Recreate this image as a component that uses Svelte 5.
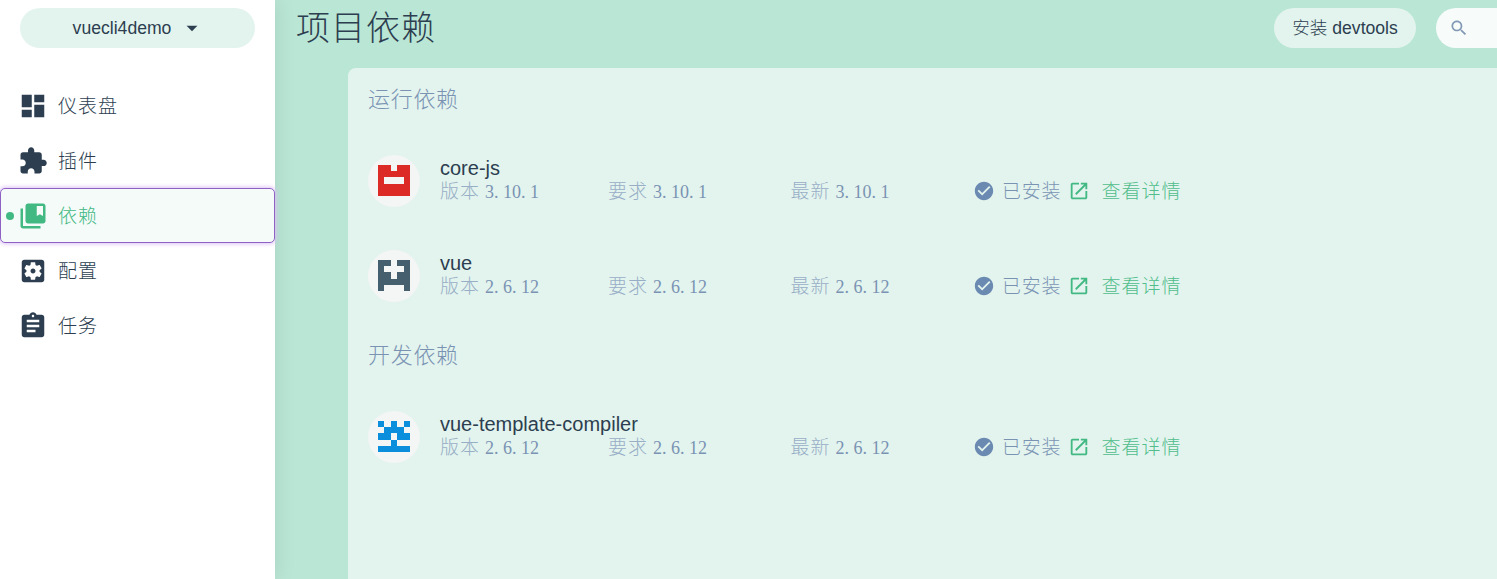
<script>
  const nav = [
    { label: '仪表盘', path: 'M3 13h8V3H3v10zm0 8h8v-6H3v6zm10 0h8V11h-8v10zm0-18v6h8V3h-8z' },
    { label: '插件', path: 'M20.5 11H19V7c0-1.1-.9-2-2-2h-4V3.500C13 2.120 11.880 1 10.500 1S8 2.120 8 3.500V5H4c-1.100 0-1.990.9-1.990 2v3.800H3.500c1.490 0 2.700 1.210 2.700 2.700s-1.210 2.700-2.700 2.700H2V20c0 1.100.9 2 2 2h3.800v-1.500c0-1.490 1.210-2.700 2.700-2.700s2.700 1.210 2.700 2.700V22H17c1.100 0 2-.9 2-2v-4h1.500c1.380 0 2.500-1.120 2.500-2.500S21.880 11 20.500 11z' },
    { label: '依赖', active: true, path: 'M4 6H2v14c0 1.100.9 2 2 2h14v-2H4V6zm16-4H8c-1.100 0-2 .9-2 2v12c0 1.100.9 2 2 2h12c1.100 0 2-.9 2-2V4c0-1.100-.9-2-2-2zm0 10l-2.500-1.500L15 12V4h5v8z' },
    { label: '配置', path: 'M12 10c-1.100 0-2 .9-2 2s.9 2 2 2 2-.9 2-2-.9-2-2-2zm7-7H5c-1.110 0-2 .9-2 2v14c0 1.100.89 2 2 2h14c1.110 0 2-.9 2-2V5c0-1.100-.89-2-2-2zm-1.750 9c0 .23-.02.46-.05.68l1.480 1.160c.13.11.17.3.08.45l-1.400 2.420c-.09.15-.27.21-.43.15l-1.740-.7c-.36.28-.76.51-1.180.69l-.26 1.850c-.03.17-.18.3-.35.3h-2.800c-.17 0-.32-.13-.35-.29l-.26-1.850c-.43-.18-.82-.41-1.180-.69l-1.740.7c-.16.06-.34 0-.43-.15l-1.400-2.420c-.09-.15-.05-.34.08-.45l1.480-1.160c-.03-.23-.05-.46-.05-.69s.02-.46.05-.68l-1.480-1.160c-.13-.11-.17-.3-.08-.45l1.400-2.420c.09-.15.27-.21.43-.15l1.740.7c.36-.28.76-.51 1.180-.69l.26-1.850c.03-.17.18-.3.35-.3h2.800c.17 0 .32.13.35.29l.26 1.850c.43.18.82.41 1.180.69l1.740-.7c.16-.06.34 0 .43.15l1.400 2.420c.09.15.05.34-.08.45l-1.480 1.160c.03.23.05.46.05.69z' },
    { label: '任务', path: 'M19 3h-4.180C14.400 1.840 13.300 1 12 1c-1.300 0-2.400.84-2.820 2H5c-1.100 0-2 .9-2 2v14c0 1.100.9 2 2 2h14c1.100 0 2-.9 2-2V5c0-1.100-.9-2-2-2zm-7 0c.55 0 1 .45 1 1s-.45 1-1 1-1-.45-1-1 .45-1 1-1zm2 14H7v-2h7v2zm3-4H7v-2h10v2zm0-4H7V7h10v2z' }
  ];

  const groups = [
    {
      title: '运行依赖',
      items: [
        { name: 'core-js', version: '3.10.1', color: '#dc2a26', cells: ['11011', '11111', '10001', '11111', '11111'] },
        { name: 'vue', version: '2.6.12', color: '#455f6e', cells: ['11011', '10001', '11011', '11111', '10001'] }
      ]
    },
    {
      title: '开发依赖',
      items: [
        { name: 'vue-template-compiler', version: '2.6.12', color: '#0b8fdc', cells: ['10101', '01110', '11011', '00100', '11111'] }
      ]
    }
  ];

  const identicon = (cells) =>
    cells
      .flatMap((row, y) => [...row].map((c, x) => (c === '1' ? `M${x} ${y}h1v1h-1z` : '')))
      .join('');
</script>

{#snippet field(label, version)}
  <span class="field"><span class="label">{label}</span><span class="version">{#each version as ch}{#if ch === '.'}<span class="dot">.</span>{:else}{ch}{/if}{/each}</span></span>
{/snippet}

<div class="app">
  <aside>
    <button class="project">
      <span>vuecli4demo</span>
      <svg class="caret" viewBox="0 0 24 24"><path d="M7 10l5 5 5-5z" /></svg>
    </button>
    <nav>
      {#each nav as item}
        <a class="nav-item" class:active={item.active}>
          <svg viewBox="0 0 24 24"><path d={item.path} /></svg>
          <span>{item.label}</span>
        </a>
      {/each}
    </nav>
  </aside>

  <main>
    <header>
      <h1>项目依赖</h1>
      <button class="devtools">安装 devtools</button>
      <div class="search">
        <svg viewBox="0 0 24 24"><path d="M15.500 14h-.79l-.28-.27C15.410 12.590 16 11.110 16 9.500 16 5.910 13.090 3 9.500 3S3 5.910 3 9.500 5.910 16 9.500 16c1.610 0 3.090-.59 4.230-1.570l.27.28v.79l5 4.990L20.490 19l-4.990-5zm-6 0C7.010 14 5 11.990 5 9.500S7.010 5 9.500 5 14 7.010 14 9.500 11.990 14 9.500 14z" /></svg>
      </div>
    </header>

    <section class="panel">
      {#each groups as group}
        <h2>{group.title}</h2>
        {#each group.items as item}
          <div class="package">
            <div class="avatar">
              <svg viewBox="0 0 5 5" preserveAspectRatio="none" shape-rendering="crispEdges"><path d={identicon(item.cells)} fill={item.color} /></svg>
            </div>
            <div class="info">
              <div class="name">{item.name}</div>
              <div class="meta">
                {@render field('版本', item.version)}
                {@render field('要求', item.version)}
                {@render field('最新', item.version)}
                <span class="installed">
                  <svg viewBox="0 0 24 24"><path d="M12 2C6.480 2 2 6.480 2 12s4.480 10 10 10 10-4.480 10-10S17.520 2 12 2zm-2 15l-5-5 1.410-1.410L10 14.170l7.590-7.590L19 8l-9 9z" /></svg>
                  <span>已安装</span>
                </span>
                <a class="details">
                  <svg viewBox="0 0 24 24"><path d="M19 19H5V5h7V3H5c-1.110 0-2 .9-2 2v14c0 1.100.89 2 2 2h14c1.100 0 2-.9 2-2v-7h-2v7zM14 3v2h3.590l-9.830 9.830 1.410 1.410L19 6.410V10h2V3h-7z" /></svg>
                  <span>查看详情</span>
                </a>
              </div>
            </div>
          </div>
        {/each}
      {/each}
    </section>
  </main>
</div>

<style>
  :global(body) {
    margin: 0;
    overflow: hidden;
  }

  .app {
    display: flex;
    width: 100%;
    height: 579px;
    overflow: hidden;
    color: #2c3e50;
    font-family: 'Liberation Sans', 'Noto Sans CJK SC', sans-serif;
    font-weight: 300;
    background: #bae6d5;
  }

  svg {
    display: block;
    flex: none;
    fill: currentColor;
  }

  button {
    border: 0;
    padding: 0;
    font: inherit;
    color: inherit;
    background: #e3f4ee;
    border-radius: 20px;
    height: 40px;
    white-space: nowrap;
  }

  aside {
    flex: none;
    width: 275px;
    background: #fff;
    box-shadow: 0 0 20px rgba(0, 40, 30, 0.1);
  }

  .project {
    display: flex;
    align-items: center;
    justify-content: center;
    gap: 8px;
    width: 235px;
    margin: 8px 20px 30px;
    padding-left: 3px;
    font-size: 17.6px;
  }

  .caret {
    width: 26px;
    height: 26px;
  }

  .nav-item {
    box-sizing: border-box;
    display: flex;
    align-items: center;
    gap: 10px;
    height: 55px;
    padding-left: 18px;
    font-size: 19px;
    letter-spacing: 1px;
    border-radius: 5px;
    position: relative;
  }

  .nav-item svg {
    width: 30px;
    height: 30px;
  }

  .nav-item span {
    padding-bottom: 2px;
  }

  .nav-item.active {
    color: #42b983;
    background: #f5fbf9;
    padding-left: 17px;
    border: 1px solid #9061c4;
    box-shadow: 0 0 4px 1px #dcc2f5;
  }

  .nav-item.active::before {
    content: '';
    position: absolute;
    left: 5px;
    top: 23px;
    width: 8px;
    height: 8px;
    border-radius: 50%;
    background: #42b983;
  }

  main {
    flex: 1;
    min-width: 0;
    display: flex;
    flex-direction: column;
  }

  header {
    display: flex;
    align-items: center;
    height: 40px;
    padding: 8px 0 20px 21px;
  }

  h1 {
    flex: 1;
    margin: 0;
    font-size: 34px;
    font-weight: 300;
    letter-spacing: 1px;
    line-height: 40px;
  }

  .devtools {
    width: 142px;
    margin-right: 20px;
    padding-bottom: 4px;
    font-size: 17.6px;
  }

  .search {
    box-sizing: border-box;
    display: flex;
    align-items: center;
    width: 61px;
    height: 40px;
    padding-left: 13px;
    border-radius: 20px 0 0 20px;
    background: #f7fcfa;
    color: #8299b5;
  }

  .search svg {
    width: 20px;
    height: 20px;
  }

  .panel {
    flex: 1;
    margin-left: 73px;
    padding-left: 20px;
    border-top-left-radius: 8px;
    background: #e3f4ee;
  }

  h2 {
    margin: 0;
    height: 66px;
    padding-top: 6px;
    box-sizing: border-box;
    font-size: 22px;
    font-weight: 300;
    letter-spacing: 0.7px;
    line-height: 52px;
    color: #7a93b3;
  }

  .package {
    box-sizing: border-box;
    display: flex;
    align-items: center;
    gap: 20px;
    height: 95px;
    padding-bottom: 1px;
  }

  .avatar {
    flex: none;
    display: flex;
    align-items: center;
    justify-content: center;
    width: 52px;
    height: 52px;
    border-radius: 50%;
    background: #f4f5f5;
  }

  .avatar svg {
    width: 32px;
    height: 31px;
    margin-bottom: 1px;
  }

  .info {
    padding-bottom: 3px;
  }

  .name {
    font-size: 20px;
    line-height: 22px;
  }

  .meta {
    display: grid;
    grid-template-columns: 168px 182.500px 182.500px 95px auto;
    grid-template-rows: 22px;
    align-items: center;
    height: 22px;
    margin-top: 1px;
    font-size: 19px;
    line-height: 20px;
    white-space: nowrap;
    color: #7a93b3;
  }

  .field,
  .installed span,
  .details span {
    padding-top: 2px;
  }

  .label {
    margin-right: 5px;
    letter-spacing: 1px;
    color: #98aec6;
  }

  .version {
    font-family: 'Liberation Serif', serif;
    font-size: 18px;
  }

  .dot {
    letter-spacing: 4.500px;
  }

  .installed,
  .details {
    display: flex;
    align-items: center;
    letter-spacing: 0.7px;
  }

  .installed svg {
    width: 22px;
    height: 22px;
    margin-right: 7px;
    color: #6b8ab1;
  }

  .details {
    color: #50bd8b;
    letter-spacing: 1px;
  }

  .details svg {
    width: 22px;
    height: 22px;
    margin-right: 11.500px;
    color: #42b983;
  }
</style>
